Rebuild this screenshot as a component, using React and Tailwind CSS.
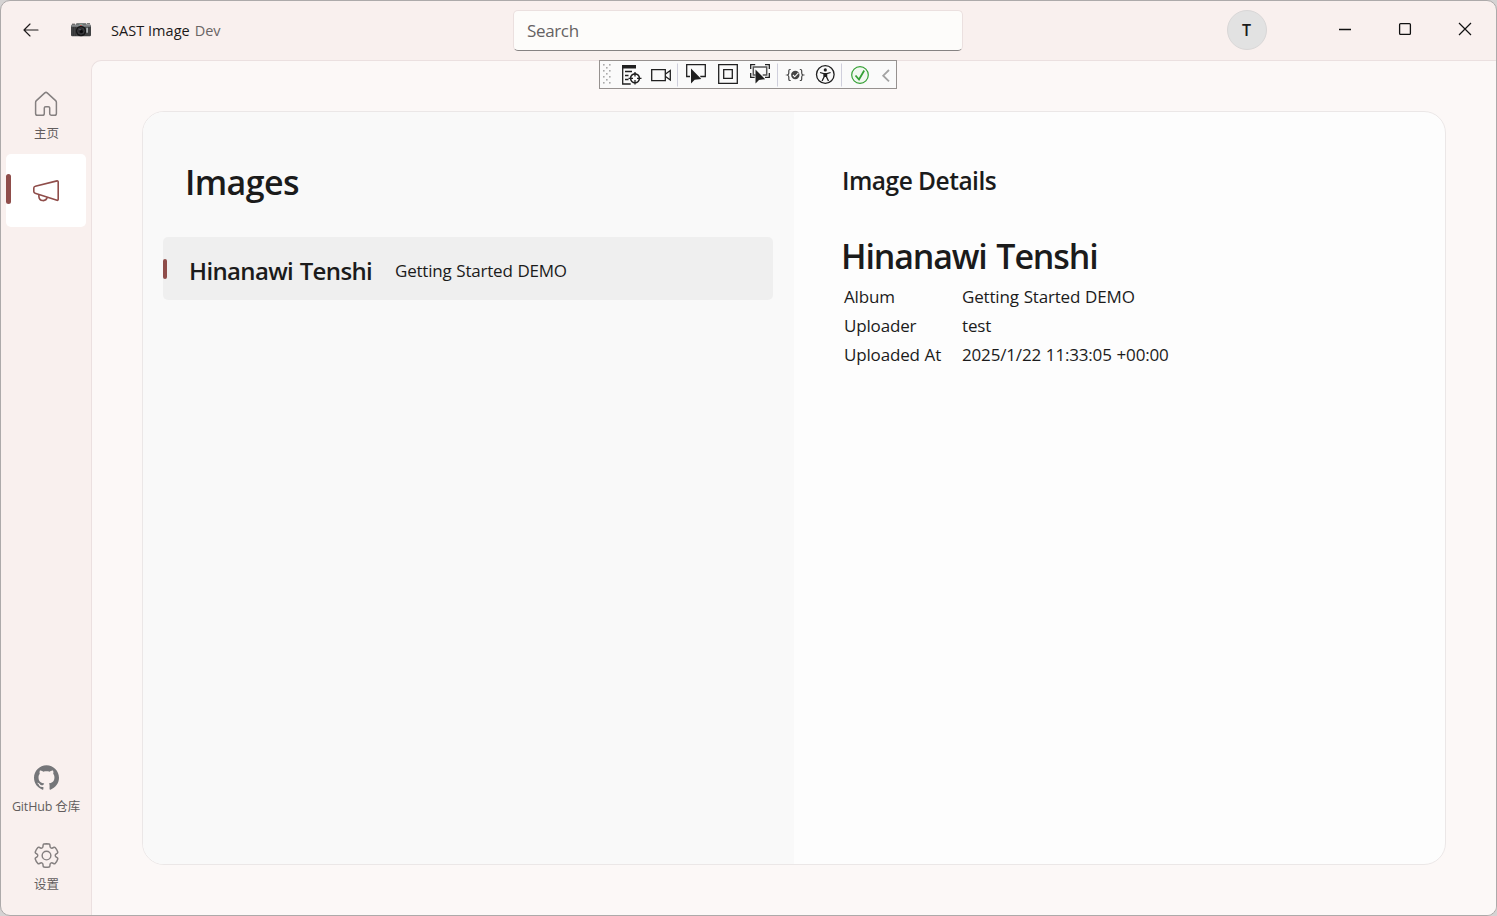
import React from "react";
import { SiGithub } from "react-icons/si";

function BackIcon() {
  return (
    <svg width="16" height="14" viewBox="0 0 16 14" fill="none" stroke="#1f1b1b" strokeWidth="1.15" strokeLinecap="round" strokeLinejoin="round">
      <path d="M15 7H1M7 1 1 7l6 6" />
    </svg>
  );
}

function CameraIcon() {
  return (
    <svg width="20" height="14" viewBox="0 0 20 14">
      <rect x="5" y="0.3" width="10.5" height="4" rx="1" fill="#5a5d5d" />
      <rect x="0" y="2" width="20" height="11.2" rx="1.2" fill="#414243" />
      <rect x="0.2" y="1.4" width="19.6" height="2.4" rx="0.8" fill="#85888a" />
      <path d="M1 1.2h3M16 .8h3" stroke="#4a4a4a" />
      <path d="M2.5 4v9M4.5 4v9" stroke="#303132" strokeWidth=".6" />
      <circle cx="10" cy="8" r="5.2" fill="#161617" />
      <circle cx="10" cy="8" r="3.3" fill="#29292b" stroke="#4b4b50" strokeWidth=".7" />
      <circle cx="10.4" cy="8.6" r="1.5" fill="#07070a" />
      <circle cx="9" cy="6.6" r=".7" fill="#77757f" />
      <path d="M8.5 1.5h3" stroke="#7fb5a4" />
      <rect x="9.4" y="1.8" width="1.1" height="1.1" fill="#e33" />
      <rect x="15.2" y="4.7" width="1.8" height="5" fill="#aaaeb0" />
    </svg>
  );
}

function HomeIcon() {
  return (
    <svg width="24" height="26" viewBox="0 0 24 26" fill="none" stroke="#858080" strokeWidth="1.5" strokeLinejoin="round">
      <path d="M10.800 1.900a1.800 1.800 0 0 1 2.400 0l8.400 7.700c.5.500.8 1.100.8 1.800v11c0 1-.8 1.800-1.800 1.800h-3.100c-1 0-1.800-.8-1.800-1.800v-5.300c0-.8-.6-1.300-1.300-1.300h-2.800c-.8 0-1.300.6-1.300 1.300v5.300c0 1-.8 1.800-1.800 1.800H3.400c-1 0-1.800-.8-1.800-1.800V11.400c0-.7.300-1.300.8-1.800z" />
    </svg>
  );
}

function MegaphoneIcon() {
  return (
    <svg width="28" height="24" viewBox="0 0 28 24" fill="none" stroke="#8f4d4a" strokeWidth="1.6" strokeLinejoin="round">
      <path d="M25 1.900 3.300 7.300c-.9.200-1.500.9-1.500 1.800v3.500c0 .8.500 1.500 1.300 1.700L25 21.300c.7.200 1.200-.3 1.200-1V2.900c0-.7-.5-1.200-1.200-1z" />
      <path d="M6.900 15.500v2.100a4.250 4.250 0 0 0 8.300 1" />
    </svg>
  );
}

function GearIcon() {
  return (
    <svg width="29" height="29" viewBox="0 0 24 24" fill="none" stroke="#858080" strokeWidth="1.2" strokeLinejoin="round">
      <path d="M12.012 2.25c.734.008 1.465.093 2.182.253a.75.75 0 0 1 .582.649l.17 1.527a1.384 1.384 0 0 0 1.927 1.116l1.401-.615a.75.75 0 0 1 .85.174 9.792 9.792 0 0 1 2.204 3.792.75.75 0 0 1-.271.825l-1.242.916a1.381 1.381 0 0 0 0 2.226l1.243.915a.75.75 0 0 1 .272.826 9.797 9.797 0 0 1-2.204 3.792.75.75 0 0 1-.848.175l-1.407-.617a1.38 1.38 0 0 0-1.926 1.114l-.169 1.526a.75.75 0 0 1-.572.647 9.518 9.518 0 0 1-4.406 0 .75.75 0 0 1-.572-.647l-.168-1.524a1.382 1.382 0 0 0-1.926-1.11l-1.406.616a.75.75 0 0 1-.849-.175 9.798 9.798 0 0 1-2.204-3.796.75.75 0 0 1 .272-.826l1.243-.916a1.38 1.38 0 0 0 0-2.226l-1.243-.914a.75.75 0 0 1-.271-.826 9.793 9.793 0 0 1 2.204-3.792.75.75 0 0 1 .85-.174l1.4.615a1.387 1.387 0 0 0 1.93-1.118l.17-1.526a.75.75 0 0 1 .583-.65c.717-.159 1.45-.243 2.201-.252Z" />
      <circle cx="12" cy="12" r="3.600" />
    </svg>
  );
}

const gripDots = [0, 1, 2, 3, 4, 5, 6].flatMap((row) =>
  [0, 1, 2].filter((col) => (row + col) % 2 === 0).map((col) => [col * 3, row * 3])
);

function DebugToolbar() {
  return (
    <div className="absolute left-[598px] top-[59px] z-10 h-[29px] w-[298px] border border-[#96918f] bg-[#fafafa]">
      <svg className="block" width="296" height="27" viewBox="600 61 296 27" fill="none" stroke="#202020" strokeWidth="1.3">
        <g fill="#a9a9a9" stroke="none">
          {gripDots.map(([x, y]) => (
            <rect key={`${x}-${y}`} x={603 + x} y={64 + y} width="1.6" height="1.6" />
          ))}
        </g>

        <path d="M622 65h14v3.500h-14z" fill="#202020" stroke="none" />
        <path d="M622.700 68v16h8M625 71.500h7M625 75.500h3.500M625 79.500h3.500" />
        <circle cx="635" cy="78.300" r="4.400" strokeWidth="1.600" />
        <path d="M635 72v4.500M635 80v4.500M628.500 78.300h4.500M637 78.300h4.500" />

        <path d="M651.700 69.700h13.600v11h-13.600z" />
        <path d="m665.500 74 4.800-3.500v9.500l-4.800-3.500" />
        <path d="M677.500 63.500v23M777.500 63.500v23M841.500 63.500v23" stroke="#cfcfdc" strokeWidth="1" />

        <path d="M690 76.500h-3.300V64.700h18.600v11.800h-5" />
        <path d="M691 68.500v15l3.700-3.800 6.600-.7z" fill="#202020" stroke="none" />

        <path d="M718.700 64.700h18.600v18.600h-18.600z" />
        <path d="M723.700 69.700h8.600v8.600h-8.600z" />

        <path d="M750.700 69v-4.300h4.500M765 64.700h4.300V69M769.300 73v4.300H765M750.700 73v4.300h4" />
        <path d="M755.500 75h-2.200v-8h13.400v8h-4" stroke="#555555" strokeWidth="1.500" />
        <path d="M755.500 69.500v14l3.500-3.600 6.200-.7z" fill="#202020" stroke="none" />

        <path d="M790.700 69.500h-.7c-.9 0-1.200.4-1.200 1.300v2.200c0 1-.4 1.700-1.500 2 1.100.3 1.500 1 1.500 2v2.200c0 .9.300 1.300 1.200 1.300h.7M799.800 69.500h.7c.9 0 1.200.4 1.200 1.300v2.200c0 1 .4 1.700 1.500 2-1.100.3-1.500 1-1.500 2v2.200c0 .9-.3 1.300-1.200 1.300h-.7" stroke="#444" strokeWidth="1.200" />
        <circle cx="795.300" cy="75" r="4.200" fill="#444" stroke="none" />
        <path d="m793 75 1.700 1.800 3.700-4" stroke="#fafafa" strokeWidth="1.100" />

        <circle cx="825.300" cy="74.500" r="8.800" />
        <circle cx="825.300" cy="69.900" r="1.600" fill="#202020" stroke="none" />
        <path d="m820 72.500 3.700 1.200h3.200l3.700-1.200M824 73.500v3.500l-1.900 4M826.600 73.500v3.500l1.900 4M824 76h2.600M825.300 73v4" />

        <circle cx="860" cy="75" r="8.300" stroke="#35a035" strokeWidth="1.200" fill="#f1f8f0" />
        <path d="m855.500 75.500 3.500 4 5.200-9" stroke="#35a035" strokeWidth="1.800" />
        <path d="m889 70-5.800 5.700 5.800 5.700" stroke="#a3a3a3" strokeWidth="1.800" />
      </svg>
    </div>
  );
}

function TitleBar() {
  return (
    <header className="flex h-[59px] shrink-0 items-start">
      <div className="flex w-[512px] items-start">
        <button className="ml-[22px] mt-[22px] block" aria-label="Back"><BackIcon /></button>
        <div className="ml-[32px] mt-[22px]"><CameraIcon /></div>
        <div className="ml-[20px] mt-[20px] flex gap-[5px] whitespace-nowrap text-[14.5px] leading-5">
          <span className="tracking-[0.04px] text-[#1c1919]">SAST Image</span>
          <span className="tracking-[-0.1px] text-[#6a6565]">Dev</span>
        </div>
      </div>
      <div className="mt-[9px] flex h-[41px] w-[450px] items-center rounded-[5px] border border-[#ebe0df] border-b-[#868282] bg-[#fdfcfa] pl-[13px] text-[17px] text-[#656262]">
        <span className="tracking-[-0.35px]">Search</span>
      </div>
      <div className="ml-[264px] mt-[9px] flex size-10 items-center justify-center rounded-full border border-[#d9d7d7] bg-[#e2e2e2] pr-px text-[16px] font-semibold text-[#1b1b1b]">T</div>
      <svg className="ml-[71px] mt-[21px]" width="134" height="14" viewBox="0 0 134 14" fill="none" stroke="#111" strokeWidth="1.300">
        <path d="M1 7.500h12" />
        <rect x="61.600" y="1.600" width="10.800" height="10.800" rx="1" />
        <path d="m121 1 12 12M133 1l-12 12" strokeWidth="1.200" />
      </svg>
    </header>
  );
}

function Sidebar() {
  return (
    <nav className="flex w-[90px] shrink-0 flex-col items-center text-[12.5px] leading-4 text-[#625d5d]">
      <div className="mt-[31px] flex flex-col items-center gap-[9px]">
        <HomeIcon />
        <span className="pl-px">主页</span>
      </div>
      <div className="mt-[12px] flex h-[73px] w-[80px] items-center rounded-[5px] bg-white">
        <span className="mb-[3px] h-[30px] w-[5px] rounded-full bg-[#8f4d4a]" />
        <span className="ml-[21px]"><MegaphoneIcon /></span>
      </div>
      <div className="mt-auto flex flex-col items-center">
        <SiGithub className="ml-px" size={25} color="#757679" />
        <span className="mt-[9px] whitespace-nowrap tracking-[-0.15px]">GitHub 仓库</span>
      </div>
      <div className="mb-[22px] mt-[26px] flex flex-col items-center">
        <GearIcon />
        <span className="mt-[7px] pl-px">设置</span>
      </div>
    </nav>
  );
}

const details = [
  ["Album", "Getting Started DEMO"],
  ["Uploader", "test"],
  ["Uploaded At", "2025/1/22 11:33:05 +00:00"],
];

export default function App() {
  return (
    <div className="h-[916px] w-[1497px] overflow-hidden bg-[#d5d3d3] font-['Open_Sans','Noto_Sans_CJK_SC',sans-serif] text-[#1b1b1b]">
      <div className="relative flex h-[916px] w-full flex-col overflow-hidden rounded-[10px] border border-[#adaaaa] bg-[#f9f0ee]">
        <TitleBar />
        <div className="flex min-h-0 flex-1">
          <Sidebar />
          <main className="flex min-w-0 flex-1 rounded-tl-[10px] border-l border-t border-[#ebe0e0] bg-[#fcf8f7] p-[50px]">
            <div className="flex flex-1 overflow-hidden rounded-[22px] border border-[#ebe7e7] bg-[#fdfdfd]">
              <section className="w-[651px] bg-[#f9f9f9] px-5 pt-[46px]">
                <h1 className="ml-[22px] whitespace-nowrap text-[34px] font-semibold leading-[48px] tracking-[-0.6px]">Images</h1>
                <div className="mt-[31px] flex h-[63px] w-[610px] items-center rounded-[5px] bg-[#efefef]">
                  <span className="h-[20px] w-[4px] rounded-full bg-[#8f4d4a]" />
                  <span className="ml-[22px] mt-[4px] w-[206px] whitespace-nowrap text-[24px] font-semibold tracking-[-0.65px] [word-spacing:1px]">Hinanawi Tenshi</span>
                  <span className="mt-[4px] whitespace-nowrap text-[17px] tracking-[-0.2px] [word-spacing:0.5px]">Getting Started DEMO</span>
                </div>
              </section>
              <section className="flex-1 pl-[47px] pt-[51px]">
                <h2 className="ml-px whitespace-nowrap text-[24.5px] font-semibold leading-[36px] tracking-[-0.5px]">Image Details</h2>
                <h3 className="mt-[33px] whitespace-nowrap text-[34px] font-semibold leading-[48px] tracking-[-1.15px] [word-spacing:2px]">Hinanawi Tenshi</h3>
                <dl className="ml-[3px] mt-[2px] text-[17px] leading-[29px]">
                  {details.map(([label, value]) => (
                    <div key={label} className="flex whitespace-nowrap tracking-[-0.17px] [word-spacing:0.6px]">
                      <dt className="w-[118px]">{label}</dt>
                      <dd>{value}</dd>
                    </div>
                  ))}
                </dl>
              </section>
            </div>
          </main>
        </div>
        <DebugToolbar />
      </div>
    </div>
  );
}
